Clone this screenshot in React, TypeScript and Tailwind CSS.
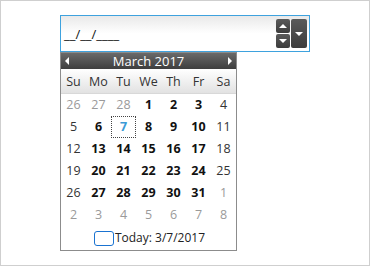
const weeks: number[][] = [
  [26, 27, 28, 1, 2, 3, 4],
  [5, 6, 7, 8, 9, 10, 11],
  [12, 13, 14, 15, 16, 17, 18],
  [19, 20, 21, 22, 23, 24, 25],
  [26, 27, 28, 29, 30, 31, 1],
  [2, 3, 4, 5, 6, 7, 8],
];

const dayNames = ["Su", "Mo", "Tu", "We", "Th", "Fr", "Sa"];

function Tri({ dir }: { dir: "up" | "down" | "left" | "right" }) {
  const pts = {
    up: "0,5 4,1 8,5",
    down: "0,1 4,5 8,1",
    left: "5,0 1,4 5,8",
    right: "1,0 5,4 1,8",
  }[dir];
  const size = dir === "up" || dir === "down" ? "w-[8px] h-[6px]" : "w-[6px] h-[8px]";
  const vb = dir === "up" || dir === "down" ? "0 0 8 6" : "0 0 6 8";
  return (
    <svg viewBox={vb} className={size}>
      <polygon points={pts} fill="#fff" />
    </svg>
  );
}

function DayCell({ value, row, col }: { value: number; row: number; col: number }) {
  const otherMonth = (row === 0 && value > 20) || (row >= 4 && value < 15);
  const weekend = col === 0 || col === 6;
  const today = row === 1 && value === 7;
  let cls = "text-[#111] font-bold";
  if (otherMonth) cls = "text-[#9a9a9a]";
  else if (weekend) cls = "text-[#333]";
  if (today) cls = "text-[#3c9ad6] font-bold border border-dotted border-[#444]";
  return (
    <div className={`h-[22px] flex items-center justify-center ${cls}`}>{value}</div>
  );
}

export default function App() {
  return (
    <div
      className="w-[370px] h-[266px] border border-[#cfcfcf] bg-white"
      style={{ fontFamily: '"Open Sans", "Noto Sans", sans-serif' }}
    >
      <div className="ml-[59px] mt-[14px]">
        <div className="w-[250px] h-[37px] border border-[#3ea2de] bg-gradient-to-b from-[#e9e9e9] via-white to-white flex items-center pl-[3px] pr-[2px]">
          <span className="flex-1 text-[13px] text-[#111] mt-[3px]">__/__/____</span>
          <div className="flex flex-col gap-[1px] mr-[1px]">
            <div className="w-[14px] h-[14px] rounded-[2px] bg-gradient-to-b from-[#5a5a5a] to-[#3c3c3c] flex items-center justify-center">
              <Tri dir="up" />
            </div>
            <div className="w-[14px] h-[14px] rounded-[2px] bg-gradient-to-b from-[#5a5a5a] to-[#3c3c3c] flex items-center justify-center">
              <Tri dir="down" />
            </div>
          </div>
          <div className="w-[16px] h-[29px] rounded-[2px] bg-gradient-to-b from-[#5a5a5a] to-[#3c3c3c] flex items-center justify-center">
            <Tri dir="down" />
          </div>
        </div>

        <div className="w-[177px] h-[199px] border border-[#8c8c8c] bg-white text-[12.5px]">
          <div className="h-[16px] bg-gradient-to-b from-[#6a6a6a] to-[#3e3e3e] flex items-center justify-between px-[3px] text-white">
            <Tri dir="left" />
            <span className="leading-none text-[13px]">March 2017</span>
            <Tri dir="right" />
          </div>
          <div className="h-[25px] grid grid-cols-7 items-center bg-gradient-to-b from-white to-[#e2e2e2] border-b border-[#d8d8d8] text-[#333] pt-[3px]">
            {dayNames.map((d) => (
              <div key={d} className="text-center">{d}</div>
            ))}
          </div>
          <div className="grid grid-cols-7">
            {weeks.map((w, r) =>
              w.map((v, c) => <DayCell key={`${r}-${c}`} value={v} row={r} col={c} />)
            )}
          </div>
          <div className="h-[24px] flex items-center justify-center gap-[1px] text-[#222] text-[12px] pl-[2px]">
            <span className="w-[20px] h-[15px] rounded-[3px] border border-[#1a73d1]" />
            <span>Today: 3/7/2017</span>
          </div>
        </div>
      </div>
    </div>
  );
}
